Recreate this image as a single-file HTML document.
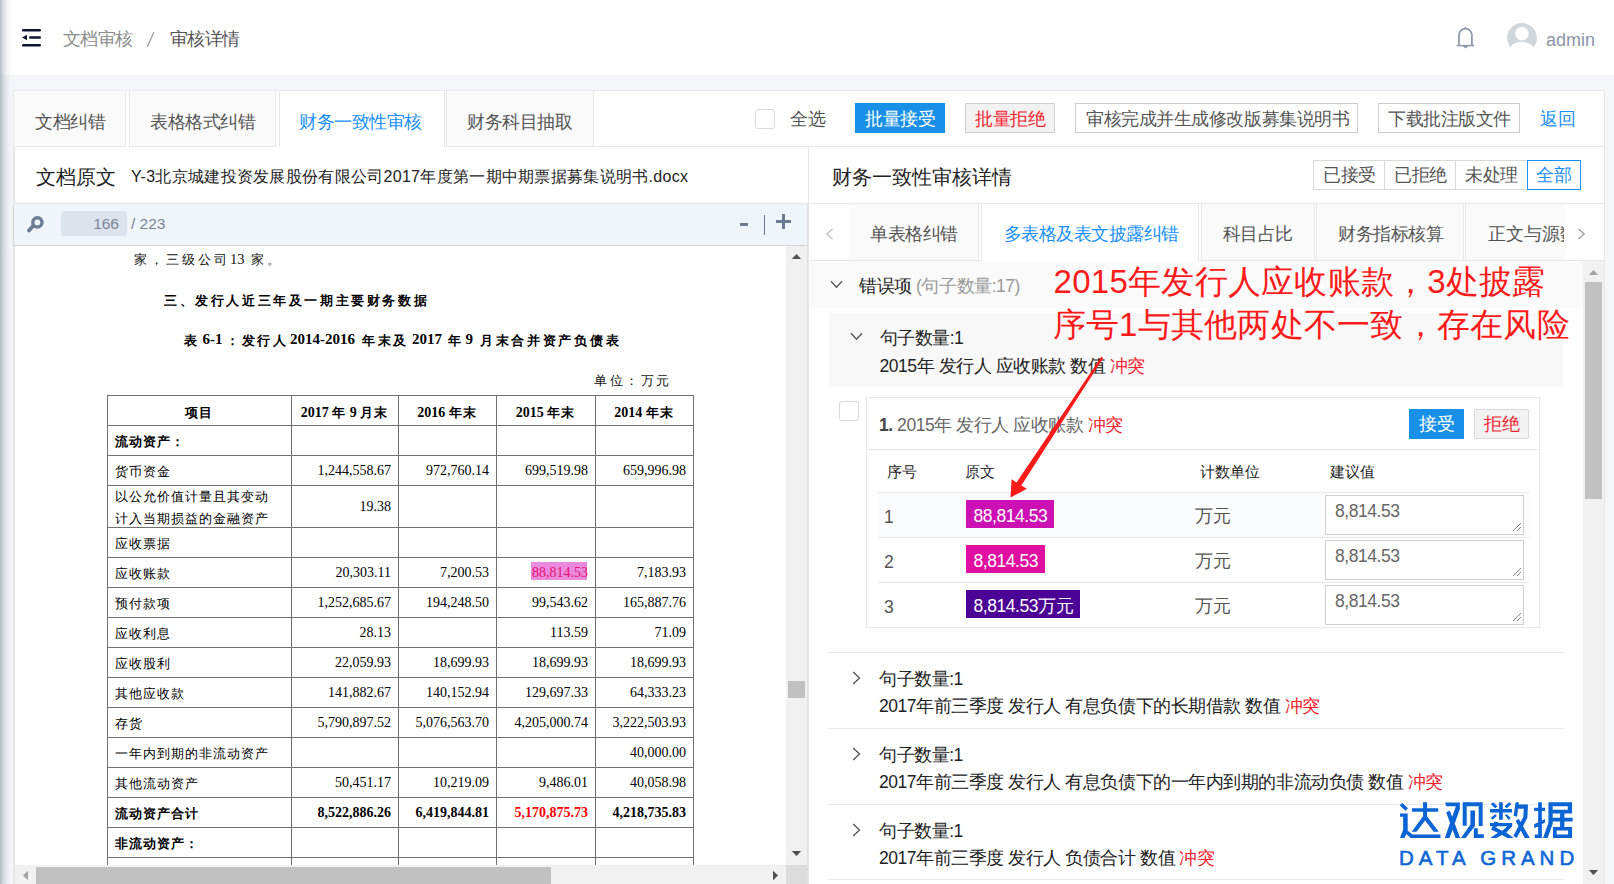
<!DOCTYPE html>
<html><head><meta charset="utf-8">
<style>
*{box-sizing:border-box;margin:0;padding:0}
html,body{width:1614px;height:884px;overflow:hidden;background:#f5f6fa;font-family:"Liberation Sans",sans-serif;color:#333}
.a{position:absolute}
.t{position:absolute;white-space:nowrap;line-height:1}
.c13{font-size:13px;letter-spacing:1px}
.f17{font-size:17.5px;letter-spacing:-0.45px}
</style></head><body>
<!-- header -->
<div class="a" style="left:0;top:0;width:1614px;height:75px;background:#fff"></div>
<svg class="a" style="left:22px;top:29px" width="20" height="18" viewBox="0 0 20 18">
<rect x="0" y="0" width="19" height="2.4" rx="1.2" fill="#0d1630"/>
<rect x="7" y="7.3" width="12" height="2.4" rx="1.2" fill="#0d1630"/>
<rect x="0" y="15" width="19" height="2.4" rx="1.2" fill="#0d1630"/>
<path d="M0 8.5 L5 5.8 L5 11.2 Z" fill="#0d1630"/>
</svg>
<div class="t f17" style="left:62.5px;top:31px;color:#8c8c8c">文档审核</div>
<svg class="a" style="left:140px;top:25px" width="20" height="28" viewBox="140 25 20 28"><path d="M153.9 32.2 L147.2 46.8" stroke="#999" stroke-width="1.25"/></svg>
<div class="t f17" style="left:169.5px;top:31px;color:#555">审核详情</div>
<!-- bell -->
<svg class="a" style="left:1450px;top:18px" width="100" height="36" viewBox="1450 18 100 36">
<path d="M1459 45.3 L1459 35.1 A6.45 6.45 0 0 1 1471.9 35.1 L1471.9 45.3" fill="none" stroke="#8e99ad" stroke-width="1.8"/>
<path d="M1456.7 45.6 L1474.2 45.6" stroke="#8e99ad" stroke-width="1.5"/>
<path d="M1464.2 28.6 L1465.45 26.2 L1466.7 28.6 Z" fill="#8e99ad"/>
<path d="M1463.6 46 A1.85 1.85 0 0 0 1467.3 46 Z" fill="#8e99ad" stroke="#8e99ad" stroke-width="0.8"/>
<defs><clipPath id="avc"><rect x="1500" y="18" width="45" height="29.3"/></clipPath>
<mask id="avm"><rect x="1500" y="18" width="50" height="36" fill="#fff"/><circle cx="1522" cy="33.6" r="6.8" fill="#000"/><circle cx="1522" cy="57.6" r="15.8" fill="#000"/></mask></defs>
<g clip-path="url(#avc)"><circle cx="1522" cy="37.95" r="14.85" fill="#cfd6dc" mask="url(#avm)"/></g>
</svg>
<div class="t" style="left:1546px;top:31px;font-size:18px;color:#8a94a6">admin</div>

<!-- left shadow -->
<div class="a" style="left:0;top:0;width:14px;height:884px;z-index:5;background:linear-gradient(to right,rgba(130,142,156,.58) 0,rgba(150,160,172,.36) 3px,rgba(170,180,192,.16) 7px,rgba(200,206,214,.04) 11px,rgba(255,255,255,0) 13px)"></div>
<!-- card -->
<div class="a" style="left:13px;top:90px;width:1592px;height:800px;background:#fff;border:1px solid #e8e8e8"></div>

<!-- main tabs -->
<div class="a" style="left:14px;top:91px;width:112px;height:56px;background:#fafafa;border-right:1px solid #e8e8e8;border-bottom:1px solid #e8e8e8"></div>
<div class="a" style="left:129px;top:91px;width:147px;height:56px;background:#fafafa;border:1px solid #e8e8e8;border-top:0"></div>
<div class="a" style="left:279px;top:91px;width:166px;height:56px;background:#fff;border-left:1px solid #e8e8e8;border-right:1px solid #e8e8e8"></div>
<div class="a" style="left:446px;top:91px;width:148px;height:56px;background:#fafafa;border:1px solid #e8e8e8;border-top:0"></div>
<div class="a" style="left:594px;top:146px;width:1010px;height:1px;background:#e8e8e8"></div>
<div class="t f17" style="left:35px;top:114px;color:#555">文档纠错</div>
<div class="t f17" style="left:150px;top:114px;color:#555">表格格式纠错</div>
<div class="t f17" style="left:299px;top:114px;color:#1890ff">财务一致性审核</div>
<div class="t f17" style="left:467px;top:114px;color:#555">财务科目抽取</div>

<!-- toolbar buttons -->
<div class="a" style="left:755px;top:109px;width:20px;height:20px;border:1px solid #d9d9d9;border-radius:3px;background:#fff"></div>
<div class="t f17" style="left:790px;top:111px;color:#555">全选</div>
<div class="a" style="left:855px;top:103px;width:90px;height:30px;background:#1890e8"></div>
<div class="t f17" style="left:865px;top:111px;color:#fff">批量接受</div>
<div class="a" style="left:965px;top:103px;width:90px;height:30px;background:#f2f2f2;border:1px solid #d0d0d0"></div>
<div class="t f17" style="left:975px;top:111px;color:#f5222d">批量拒绝</div>
<div class="a" style="left:1075px;top:103px;width:283px;height:30px;background:#fff;border:1px solid #ccc"></div>
<div class="t f17" style="left:1086px;top:111px;color:#555">审核完成并生成修改版募集说明书</div>
<div class="a" style="left:1378px;top:103px;width:142px;height:30px;background:#fff;border:1px solid #ccc"></div>
<div class="t f17" style="left:1388px;top:111px;color:#555">下载批注版文件</div>
<div class="t f17" style="left:1540px;top:111px;color:#1890ff">返回</div>

<!-- panel divider -->
<div class="a" style="left:14px;top:147px;width:1px;height:737px;background:#e4e4e4"></div>
<div class="a" style="left:808px;top:147px;width:1px;height:737px;background:#e8e8e8"></div>
<div class="a" style="left:14px;top:203px;width:1590px;height:1px;background:#e8e8e8"></div>

<!-- LEFT PANEL HEADER -->
<div class="t" style="left:36px;top:167px;font-size:20px;color:#222">文档原文</div>
<div class="t" style="left:131px;top:169px;font-size:16px;color:#222;letter-spacing:0.3px">Y-3北京城建投资发展股份有限公司2017年度第一期中期票据募集说明书.docx</div>

<!-- left toolbar -->
<div class="a" style="left:14px;top:204px;width:793px;height:41px;background:#f0f5fc;box-shadow:0 1px 2px rgba(0,0,0,.25)"></div>
<svg class="a" style="left:27px;top:215px" width="19" height="19" viewBox="0 0 19 19">
<circle cx="10.4" cy="7.4" r="4.6" fill="none" stroke="#6b7c93" stroke-width="3.4"/>
<path d="M6 11 L2 15.6" stroke="#6b7c93" stroke-width="3.8" stroke-linecap="round"/>
</svg>
<div class="a" style="left:61px;top:211px;width:66px;height:25px;background:#dde3ec;border-radius:3px"></div>
<div class="t" style="left:61px;top:216px;width:58px;text-align:right;font-size:15.5px;color:#7a8696">166</div>
<div class="t" style="left:131px;top:216px;font-size:15.5px;color:#7a8696">/ 223</div>
<div class="a" style="left:740px;top:223px;width:8px;height:3px;background:#6b7c93"></div>
<div class="a" style="left:764px;top:215px;width:1px;height:20px;background:#6b7c93"></div>
<div class="a" style="left:776px;top:220px;width:15px;height:3px;background:#6b7c93"></div>
<div class="a" style="left:782px;top:214px;width:3px;height:15px;background:#6b7c93"></div>

<div class="a" style="left:0;top:0;width:1614px;height:884px;clip-path:inset(246px 828px 19px 14px)">
<div class="a" style="left:15px;top:246px;width:771px;height:619px;background:#fff"></div>
<div class="t" style="left:134px;top:253px;font-size:13px;color:#111;font-family:'Liberation Serif',serif;letter-spacing:3px;">家，三级公司</div>
<div class="t" style="left:230px;top:252px;font-size:14.5px;color:#111;font-family:'Liberation Serif',serif;">13</div>
<div class="t" style="left:251px;top:253px;font-size:13px;color:#111;font-family:'Liberation Serif',serif;letter-spacing:3px;">家。</div>
<div class="t" style="left:164px;top:294px;font-size:13px;color:#000;font-family:'Liberation Serif',serif;font-weight:bold;letter-spacing:2.6px;">三、发行人近三年及一期主要财务数据</div>
<div class="t" style="left:184px;top:334px;font-size:13px;color:#000;font-family:'Liberation Serif',serif;font-weight:bold;">表</div>
<div class="t" style="left:202.5px;top:332px;font-size:15px;color:#000;font-family:'Liberation Serif',serif;font-weight:bold;">6-1</div>
<div class="t" style="left:226px;top:334px;font-size:13px;color:#000;font-family:'Liberation Serif',serif;font-weight:bold;letter-spacing:2.7px;">：发行人</div>
<div class="t" style="left:290px;top:332px;font-size:15px;color:#000;font-family:'Liberation Serif',serif;font-weight:bold;">2014-2016</div>
<div class="t" style="left:362px;top:334px;font-size:13px;color:#000;font-family:'Liberation Serif',serif;font-weight:bold;letter-spacing:2.7px;">年末及</div>
<div class="t" style="left:412px;top:332px;font-size:15px;color:#000;font-family:'Liberation Serif',serif;font-weight:bold;">2017</div>
<div class="t" style="left:448px;top:334px;font-size:13px;color:#000;font-family:'Liberation Serif',serif;font-weight:bold;">年</div>
<div class="t" style="left:465.5px;top:332px;font-size:15px;color:#000;font-family:'Liberation Serif',serif;font-weight:bold;">9</div>
<div class="t" style="left:480px;top:334px;font-size:13px;color:#000;font-family:'Liberation Serif',serif;font-weight:bold;letter-spacing:2.7px;">月末合并资产负债表</div>
<div class="t" style="left:594px;top:374px;font-size:13px;color:#111;font-family:'Liberation Serif',serif;letter-spacing:2.5px;">单位：万元</div>
<div class="a" style="left:107px;top:395px;width:587px;height:1px;background:#707070"></div>
<div class="a" style="left:107px;top:425px;width:587px;height:1px;background:#707070"></div>
<div class="a" style="left:107px;top:455px;width:587px;height:1px;background:#707070"></div>
<div class="a" style="left:107px;top:485px;width:587px;height:1px;background:#707070"></div>
<div class="a" style="left:107px;top:527px;width:587px;height:1px;background:#707070"></div>
<div class="a" style="left:107px;top:557px;width:587px;height:1px;background:#707070"></div>
<div class="a" style="left:107px;top:587px;width:587px;height:1px;background:#707070"></div>
<div class="a" style="left:107px;top:617px;width:587px;height:1px;background:#707070"></div>
<div class="a" style="left:107px;top:647px;width:587px;height:1px;background:#707070"></div>
<div class="a" style="left:107px;top:677px;width:587px;height:1px;background:#707070"></div>
<div class="a" style="left:107px;top:707px;width:587px;height:1px;background:#707070"></div>
<div class="a" style="left:107px;top:737px;width:587px;height:1px;background:#707070"></div>
<div class="a" style="left:107px;top:767px;width:587px;height:1px;background:#707070"></div>
<div class="a" style="left:107px;top:797px;width:587px;height:1px;background:#707070"></div>
<div class="a" style="left:107px;top:827px;width:587px;height:1px;background:#707070"></div>
<div class="a" style="left:107px;top:857px;width:587px;height:1px;background:#707070"></div>
<div class="a" style="left:107px;top:887px;width:587px;height:1px;background:#707070"></div>
<div class="a" style="left:107px;top:395px;width:1px;height:500px;background:#707070"></div>
<div class="a" style="left:291px;top:395px;width:1px;height:500px;background:#707070"></div>
<div class="a" style="left:398px;top:395px;width:1px;height:500px;background:#707070"></div>
<div class="a" style="left:496px;top:395px;width:1px;height:500px;background:#707070"></div>
<div class="a" style="left:595px;top:395px;width:1px;height:500px;background:#707070"></div>
<div class="a" style="left:693px;top:395px;width:1px;height:500px;background:#707070"></div>
<div class="t" style="left:107px;top:398px;width:184px;height:30px;line-height:30px;text-align:center;font-size:14px;font-family:'Liberation Serif',serif;color:#000;font-weight:bold;"><span class="c13">项目</span></div>
<div class="t" style="left:291px;top:398px;width:107px;height:30px;line-height:30px;text-align:center;font-size:14px;font-family:'Liberation Serif',serif;color:#000;font-weight:bold;">2017 <span class="c13">年</span> 9 <span class="c13">月末</span></div>
<div class="t" style="left:398px;top:398px;width:98px;height:30px;line-height:30px;text-align:center;font-size:14px;font-family:'Liberation Serif',serif;color:#000;font-weight:bold;">2016 <span class="c13">年末</span></div>
<div class="t" style="left:496px;top:398px;width:99px;height:30px;line-height:30px;text-align:center;font-size:14px;font-family:'Liberation Serif',serif;color:#000;font-weight:bold;">2015 <span class="c13">年末</span></div>
<div class="t" style="left:595px;top:398px;width:98px;height:30px;line-height:30px;text-align:center;font-size:14px;font-family:'Liberation Serif',serif;color:#000;font-weight:bold;">2014 <span class="c13">年末</span></div>
<div class="t" style="left:115px;top:427px;height:30px;line-height:30px;font-size:13px;letter-spacing:1px;font-family:'Liberation Serif',serif;color:#000;font-weight:bold;">流动资产：</div>
<div class="t" style="left:115px;top:457px;height:30px;line-height:30px;font-size:13px;letter-spacing:1px;font-family:'Liberation Serif',serif;color:#000;">货币资金</div>
<div class="t" style="left:291px;top:456px;width:100px;height:30px;line-height:30px;text-align:right;font-size:14px;font-family:'Liberation Serif',serif;color:#000;">1,244,558.67</div>
<div class="t" style="left:398px;top:456px;width:91px;height:30px;line-height:30px;text-align:right;font-size:14px;font-family:'Liberation Serif',serif;color:#000;">972,760.14</div>
<div class="t" style="left:496px;top:456px;width:92px;height:30px;line-height:30px;text-align:right;font-size:14px;font-family:'Liberation Serif',serif;color:#000;">699,519.98</div>
<div class="t" style="left:595px;top:456px;width:91px;height:30px;line-height:30px;text-align:right;font-size:14px;font-family:'Liberation Serif',serif;color:#000;">659,996.98</div>
<div class="t" style="left:115px;top:486px;line-height:22px;font-size:13px;letter-spacing:1px;font-family:'Liberation Serif',serif;color:#000;">以公允价值计量且其变动<br>计入当期损益的金融资产</div>
<div class="t" style="left:291px;top:486px;width:100px;height:42px;line-height:42px;text-align:right;font-size:14px;font-family:'Liberation Serif',serif;color:#000;">19.38</div>
<div class="t" style="left:115px;top:529px;height:30px;line-height:30px;font-size:13px;letter-spacing:1px;font-family:'Liberation Serif',serif;color:#000;">应收票据</div>
<div class="t" style="left:115px;top:559px;height:30px;line-height:30px;font-size:13px;letter-spacing:1px;font-family:'Liberation Serif',serif;color:#000;">应收账款</div>
<div class="t" style="left:291px;top:558px;width:100px;height:30px;line-height:30px;text-align:right;font-size:14px;font-family:'Liberation Serif',serif;color:#000;">20,303.11</div>
<div class="t" style="left:398px;top:558px;width:91px;height:30px;line-height:30px;text-align:right;font-size:14px;font-family:'Liberation Serif',serif;color:#000;">7,200.53</div>
<div class="a" style="left:531px;top:562px;width:56px;height:18px;background:#e98ade"></div>
<div class="t" style="left:496px;top:558px;width:92px;height:30px;line-height:30px;text-align:right;font-size:14px;font-family:'Liberation Serif',serif;color:#e8106e;">88,814.53</div>
<div class="t" style="left:595px;top:558px;width:91px;height:30px;line-height:30px;text-align:right;font-size:14px;font-family:'Liberation Serif',serif;color:#000;">7,183.93</div>
<div class="t" style="left:115px;top:589px;height:30px;line-height:30px;font-size:13px;letter-spacing:1px;font-family:'Liberation Serif',serif;color:#000;">预付款项</div>
<div class="t" style="left:291px;top:588px;width:100px;height:30px;line-height:30px;text-align:right;font-size:14px;font-family:'Liberation Serif',serif;color:#000;">1,252,685.67</div>
<div class="t" style="left:398px;top:588px;width:91px;height:30px;line-height:30px;text-align:right;font-size:14px;font-family:'Liberation Serif',serif;color:#000;">194,248.50</div>
<div class="t" style="left:496px;top:588px;width:92px;height:30px;line-height:30px;text-align:right;font-size:14px;font-family:'Liberation Serif',serif;color:#000;">99,543.62</div>
<div class="t" style="left:595px;top:588px;width:91px;height:30px;line-height:30px;text-align:right;font-size:14px;font-family:'Liberation Serif',serif;color:#000;">165,887.76</div>
<div class="t" style="left:115px;top:619px;height:30px;line-height:30px;font-size:13px;letter-spacing:1px;font-family:'Liberation Serif',serif;color:#000;">应收利息</div>
<div class="t" style="left:291px;top:618px;width:100px;height:30px;line-height:30px;text-align:right;font-size:14px;font-family:'Liberation Serif',serif;color:#000;">28.13</div>
<div class="t" style="left:496px;top:618px;width:92px;height:30px;line-height:30px;text-align:right;font-size:14px;font-family:'Liberation Serif',serif;color:#000;">113.59</div>
<div class="t" style="left:595px;top:618px;width:91px;height:30px;line-height:30px;text-align:right;font-size:14px;font-family:'Liberation Serif',serif;color:#000;">71.09</div>
<div class="t" style="left:115px;top:649px;height:30px;line-height:30px;font-size:13px;letter-spacing:1px;font-family:'Liberation Serif',serif;color:#000;">应收股利</div>
<div class="t" style="left:291px;top:648px;width:100px;height:30px;line-height:30px;text-align:right;font-size:14px;font-family:'Liberation Serif',serif;color:#000;">22,059.93</div>
<div class="t" style="left:398px;top:648px;width:91px;height:30px;line-height:30px;text-align:right;font-size:14px;font-family:'Liberation Serif',serif;color:#000;">18,699.93</div>
<div class="t" style="left:496px;top:648px;width:92px;height:30px;line-height:30px;text-align:right;font-size:14px;font-family:'Liberation Serif',serif;color:#000;">18,699.93</div>
<div class="t" style="left:595px;top:648px;width:91px;height:30px;line-height:30px;text-align:right;font-size:14px;font-family:'Liberation Serif',serif;color:#000;">18,699.93</div>
<div class="t" style="left:115px;top:679px;height:30px;line-height:30px;font-size:13px;letter-spacing:1px;font-family:'Liberation Serif',serif;color:#000;">其他应收款</div>
<div class="t" style="left:291px;top:678px;width:100px;height:30px;line-height:30px;text-align:right;font-size:14px;font-family:'Liberation Serif',serif;color:#000;">141,882.67</div>
<div class="t" style="left:398px;top:678px;width:91px;height:30px;line-height:30px;text-align:right;font-size:14px;font-family:'Liberation Serif',serif;color:#000;">140,152.94</div>
<div class="t" style="left:496px;top:678px;width:92px;height:30px;line-height:30px;text-align:right;font-size:14px;font-family:'Liberation Serif',serif;color:#000;">129,697.33</div>
<div class="t" style="left:595px;top:678px;width:91px;height:30px;line-height:30px;text-align:right;font-size:14px;font-family:'Liberation Serif',serif;color:#000;">64,333.23</div>
<div class="t" style="left:115px;top:709px;height:30px;line-height:30px;font-size:13px;letter-spacing:1px;font-family:'Liberation Serif',serif;color:#000;">存货</div>
<div class="t" style="left:291px;top:708px;width:100px;height:30px;line-height:30px;text-align:right;font-size:14px;font-family:'Liberation Serif',serif;color:#000;">5,790,897.52</div>
<div class="t" style="left:398px;top:708px;width:91px;height:30px;line-height:30px;text-align:right;font-size:14px;font-family:'Liberation Serif',serif;color:#000;">5,076,563.70</div>
<div class="t" style="left:496px;top:708px;width:92px;height:30px;line-height:30px;text-align:right;font-size:14px;font-family:'Liberation Serif',serif;color:#000;">4,205,000.74</div>
<div class="t" style="left:595px;top:708px;width:91px;height:30px;line-height:30px;text-align:right;font-size:14px;font-family:'Liberation Serif',serif;color:#000;">3,222,503.93</div>
<div class="t" style="left:115px;top:739px;height:30px;line-height:30px;font-size:13px;letter-spacing:1px;font-family:'Liberation Serif',serif;color:#000;">一年内到期的非流动资产</div>
<div class="t" style="left:595px;top:738px;width:91px;height:30px;line-height:30px;text-align:right;font-size:14px;font-family:'Liberation Serif',serif;color:#000;">40,000.00</div>
<div class="t" style="left:115px;top:769px;height:30px;line-height:30px;font-size:13px;letter-spacing:1px;font-family:'Liberation Serif',serif;color:#000;">其他流动资产</div>
<div class="t" style="left:291px;top:768px;width:100px;height:30px;line-height:30px;text-align:right;font-size:14px;font-family:'Liberation Serif',serif;color:#000;">50,451.17</div>
<div class="t" style="left:398px;top:768px;width:91px;height:30px;line-height:30px;text-align:right;font-size:14px;font-family:'Liberation Serif',serif;color:#000;">10,219.09</div>
<div class="t" style="left:496px;top:768px;width:92px;height:30px;line-height:30px;text-align:right;font-size:14px;font-family:'Liberation Serif',serif;color:#000;">9,486.01</div>
<div class="t" style="left:595px;top:768px;width:91px;height:30px;line-height:30px;text-align:right;font-size:14px;font-family:'Liberation Serif',serif;color:#000;">40,058.98</div>
<div class="t" style="left:115px;top:799px;height:30px;line-height:30px;font-size:13px;letter-spacing:1px;font-family:'Liberation Serif',serif;color:#000;font-weight:bold;">流动资产合计</div>
<div class="t" style="left:291px;top:798px;width:100px;height:30px;line-height:30px;text-align:right;font-size:14px;font-family:'Liberation Serif',serif;color:#000;font-weight:bold;">8,522,886.26</div>
<div class="t" style="left:398px;top:798px;width:91px;height:30px;line-height:30px;text-align:right;font-size:14px;font-family:'Liberation Serif',serif;color:#000;font-weight:bold;">6,419,844.81</div>
<div class="t" style="left:496px;top:798px;width:92px;height:30px;line-height:30px;text-align:right;font-size:14px;font-family:'Liberation Serif',serif;color:#ff0000;font-weight:bold;">5,170,875.73</div>
<div class="t" style="left:595px;top:798px;width:91px;height:30px;line-height:30px;text-align:right;font-size:14px;font-family:'Liberation Serif',serif;color:#000;font-weight:bold;">4,218,735.83</div>
<div class="t" style="left:115px;top:829px;height:30px;line-height:30px;font-size:13px;letter-spacing:1px;font-family:'Liberation Serif',serif;color:#000;font-weight:bold;">非流动资产：</div>
</div>
<div class="a" style="left:786px;top:246px;width:21px;height:619px;background:#f1f1f1"></div>
<svg class="a" style="left:791px;top:253px" width="11" height="7"><path d="M0.8 6 L5.5 1 L10.2 6 Z" fill="#505050"/></svg>
<div class="a" style="left:788px;top:681px;width:17px;height:17px;background:#c1c1c1"></div>
<svg class="a" style="left:791px;top:850px" width="11" height="7"><path d="M0.8 1 L5.5 6 L10.2 1 Z" fill="#505050"/></svg>
<div class="a" style="left:15px;top:865px;width:771px;height:19px;background:#f1f1f1"></div>
<div class="a" style="left:786px;top:865px;width:21px;height:19px;background:#dcdcdc"></div>
<svg class="a" style="left:22px;top:870px" width="7" height="11"><path d="M6 0.8 L1 5.5 L6 10.2 Z" fill="#a3a3a3"/></svg>
<div class="a" style="left:36px;top:867px;width:515px;height:17px;background:#c1c1c1"></div>
<svg class="a" style="left:772px;top:870px" width="7" height="11"><path d="M1 0.8 L6 5.5 L1 10.2 Z" fill="#505050"/></svg>
<div class="a" style="left:807px;top:204px;width:1px;height:680px;background:#e0e0e0"></div>
<div class="t" style="left:832px;top:167px;font-size:20px;color:#222;">财务一致性审核详情</div>
<div class="a" style="left:1313px;top:160px;width:268px;height:30px;background:#fff;border:1px solid #d9d9d9;"></div>
<div class="a" style="left:1384px;top:160px;width:1px;height:30px;background:#d9d9d9;"></div>
<div class="a" style="left:1455px;top:160px;width:1px;height:30px;background:#d9d9d9;"></div>
<div class="a" style="left:1527px;top:160px;width:54px;height:30px;background:#fff;border:1px solid #1890ff;"></div>
<div class="t" style="left:1323px;top:167px;font-size:17.5px;color:#555;letter-spacing:-0.45px;">已接受</div>
<div class="t" style="left:1394px;top:167px;font-size:17.5px;color:#555;letter-spacing:-0.45px;">已拒绝</div>
<div class="t" style="left:1465px;top:167px;font-size:17.5px;color:#555;letter-spacing:-0.45px;">未处理</div>
<div class="t" style="left:1536px;top:167px;font-size:17.5px;color:#1890ff;letter-spacing:-0.45px;">全部</div>
<div class="a" style="left:849px;top:204px;width:130px;height:56px;background:#fafafa;border-right:1px solid #e8e8e8"></div>
<div class="a" style="left:981px;top:204px;width:218px;height:57px;background:#fff;border-left:1px solid #e8e8e8;border-right:1px solid #e8e8e8"></div>
<div class="a" style="left:1201px;top:204px;width:114px;height:56px;background:#fafafa;border-left:1px solid #e8e8e8;border-right:1px solid #e8e8e8"></div>
<div class="a" style="left:1316px;top:204px;width:148px;height:56px;background:#fafafa;border-left:1px solid #e8e8e8;border-right:1px solid #e8e8e8"></div>
<div class="a" style="left:1465px;top:204px;width:100px;height:56px;background:#fafafa;border-left:1px solid #e8e8e8"></div>
<div class="a" style="left:809px;top:260px;width:172px;height:1px;background:#e8e8e8;"></div>
<div class="a" style="left:1199px;top:260px;width:405px;height:1px;background:#e8e8e8;"></div>
<svg class="a" style="left:825px;top:228px" width="9" height="12"><path d="M7.5 1 L1.8 6 L7.5 11" fill="none" stroke="#bbb" stroke-width="1.2"/></svg>
<svg class="a" style="left:1577px;top:228px" width="9" height="12"><path d="M1.5 1 L7.2 6 L1.5 11" fill="none" stroke="#999" stroke-width="1.2"/></svg>
<div class="t" style="left:870px;top:226px;font-size:17.5px;color:#555;letter-spacing:-0.45px;">单表格纠错</div>
<div class="t" style="left:1003.5px;top:226px;font-size:17.5px;color:#1890ff;letter-spacing:-0.45px;">多表格及表文披露纠错</div>
<div class="t" style="left:1222.5px;top:226px;font-size:17.5px;color:#555;letter-spacing:-0.45px;">科目占比</div>
<div class="t" style="left:1338px;top:226px;font-size:17.5px;color:#555;letter-spacing:-0.45px;">财务指标核算</div>
<div class="a" style="left:1466px;top:204px;width:98px;height:56px;overflow:hidden"><div class="t" style="left:22px;top:22px;font-size:17.5px;color:#555">正文与源数据</div></div>
<div class="a" style="left:809px;top:261px;width:774px;height:47px;background:#fafafa;"></div>
<svg class="a" style="left:830px;top:280px" width="13" height="9"><path d="M1 1.2 L6.5 7.2 L12 1.2" fill="none" stroke="#555" stroke-width="1.3"/></svg>
<div class="t" style="left:859px;top:278px;font-size:17.5px;color:#222;letter-spacing:-0.45px;">错误项 <span style="color:#999">(句子数量:17)</span></div>
<div class="a" style="left:829px;top:313px;width:734px;height:74px;background:#f8f8f8;"></div>
<svg class="a" style="left:850px;top:332px" width="13" height="9"><path d="M1 1.2 L6.5 7.2 L12 1.2" fill="none" stroke="#555" stroke-width="1.3"/></svg>
<div class="t" style="left:879.5px;top:329.5px;font-size:17.5px;color:#222;letter-spacing:-0.45px;">句子数量:1</div>
<div class="t" style="left:879.5px;top:357.5px;font-size:17.5px;color:#222;letter-spacing:-0.45px;">2015年 发行人 应收账款 数值 <span style="color:#f5222d">冲突</span></div>
<div class="a" style="left:839px;top:401px;width:20px;height:20px;background:#fff;border:1px solid #d9d9d9;border-radius:3px"></div>
<div class="a" style="left:866px;top:397px;width:674px;height:231px;background:#fff;border:1px solid #e8e8e8;"></div>
<div class="t" style="left:879px;top:417px;font-size:17.5px;color:#666;letter-spacing:-0.45px;"><b style="color:#444">1.</b> 2015年 发行人 应收账款 <span style="color:#f5222d">冲突</span></div>
<div class="a" style="left:1409px;top:409px;width:55px;height:30px;background:#1890e8;"></div>
<div class="t" style="left:1419px;top:416px;font-size:17.5px;color:#fff;letter-spacing:-0.45px;">接受</div>
<div class="a" style="left:1474px;top:409px;width:55px;height:30px;background:#f2f2f2;border:1px solid #d9d9d9;"></div>
<div class="t" style="left:1484px;top:416px;font-size:17.5px;color:#f5222d;letter-spacing:-0.45px;">拒绝</div>
<div class="a" style="left:867px;top:449px;width:672px;height:1px;background:#e8e8e8;"></div>
<div class="t" style="left:887px;top:463.5px;font-size:15px;color:#222;">序号</div>
<div class="t" style="left:965px;top:463.5px;font-size:15px;color:#222;">原文</div>
<div class="t" style="left:1199.5px;top:463.5px;font-size:15px;color:#222;">计数单位</div>
<div class="t" style="left:1330px;top:463.5px;font-size:15px;color:#222;">建议值</div>
<div class="a" style="left:878px;top:492px;width:651px;height:1px;background:#e8e8e8;"></div>
<div class="a" style="left:878px;top:493px;width:651px;height:44px;background:#fbfcfe;"></div>
<div class="a" style="left:878px;top:537px;width:651px;height:1px;background:#e8e8e8;"></div>
<div class="a" style="left:878px;top:582px;width:651px;height:1px;background:#e8e8e8;"></div>
<div class="t" style="left:884px;top:508.5px;font-size:17.5px;color:#555;letter-spacing:-0.45px;font-size:17.5px">1</div>
<div class="a" style="left:966px;top:500px;width:88px;height:28px;background:#cc10b4;"></div>
<div class="t" style="left:973.5px;top:507.5px;font-size:17.5px;color:#fff;letter-spacing:-0.45px;">88,814.53</div>
<div class="t" style="left:1195px;top:508px;font-size:17.5px;color:#555;letter-spacing:-0.45px;">万元</div>
<div class="a" style="left:1325px;top:495px;width:199px;height:40px;background:#fff;border:1px solid #d0d0d0;"></div>
<div class="t" style="left:1335px;top:502.5px;font-size:17.5px;color:#666;letter-spacing:-0.45px;">8,814.53</div>
<svg class="a" style="left:1512px;top:522px" width="10" height="10"><path d="M1 9 L9 1 M5 9 L9 5" stroke="#888" stroke-width="1"/></svg>
<div class="t" style="left:884px;top:553.5px;font-size:17.5px;color:#555;letter-spacing:-0.45px;font-size:17.5px">2</div>
<div class="a" style="left:966px;top:545px;width:79px;height:28px;background:#e10ea2;"></div>
<div class="t" style="left:973.5px;top:552.5px;font-size:17.5px;color:#fff;letter-spacing:-0.45px;">8,814.53</div>
<div class="t" style="left:1195px;top:553px;font-size:17.5px;color:#555;letter-spacing:-0.45px;">万元</div>
<div class="a" style="left:1325px;top:540px;width:199px;height:40px;background:#fff;border:1px solid #d0d0d0;"></div>
<div class="t" style="left:1335px;top:547.5px;font-size:17.5px;color:#666;letter-spacing:-0.45px;">8,814.53</div>
<svg class="a" style="left:1512px;top:567px" width="10" height="10"><path d="M1 9 L9 1 M5 9 L9 5" stroke="#888" stroke-width="1"/></svg>
<div class="t" style="left:884px;top:598.5px;font-size:17.5px;color:#555;letter-spacing:-0.45px;font-size:17.5px">3</div>
<div class="a" style="left:966px;top:590px;width:114px;height:28px;background:#4b0096;"></div>
<div class="t" style="left:973.5px;top:597.5px;font-size:17.5px;color:#fff;letter-spacing:-0.45px;">8,814.53万元</div>
<div class="t" style="left:1195px;top:598px;font-size:17.5px;color:#555;letter-spacing:-0.45px;">万元</div>
<div class="a" style="left:1325px;top:585px;width:199px;height:40px;background:#fff;border:1px solid #d0d0d0;"></div>
<div class="t" style="left:1335px;top:592.5px;font-size:17.5px;color:#666;letter-spacing:-0.45px;">8,814.53</div>
<svg class="a" style="left:1512px;top:612px" width="10" height="10"><path d="M1 9 L9 1 M5 9 L9 5" stroke="#888" stroke-width="1"/></svg>
<div class="a" style="left:829px;top:652px;width:734px;height:1px;background:#e8e8e8;"></div>
<div class="a" style="left:829px;top:728px;width:734px;height:1px;background:#e8e8e8;"></div>
<div class="a" style="left:829px;top:804px;width:734px;height:1px;background:#e8e8e8;"></div>
<div class="a" style="left:829px;top:879px;width:734px;height:1px;background:#e8e8e8;"></div>
<svg class="a" style="left:852px;top:671px" width="9" height="14"><path d="M1.2 1 L7.5 7 L1.2 13" fill="none" stroke="#555" stroke-width="1.3"/></svg>
<div class="t" style="left:879px;top:670.5px;font-size:17.5px;color:#222;letter-spacing:-0.45px;">句子数量:1</div>
<div class="t" style="left:879px;top:697.5px;font-size:17.5px;color:#222;letter-spacing:-0.45px;">2017年前三季度 发行人 有息负债下的长期借款 数值 <span style="color:#f5222d">冲突</span></div>
<svg class="a" style="left:852px;top:747px" width="9" height="14"><path d="M1.2 1 L7.5 7 L1.2 13" fill="none" stroke="#555" stroke-width="1.3"/></svg>
<div class="t" style="left:879px;top:746.5px;font-size:17.5px;color:#222;letter-spacing:-0.45px;">句子数量:1</div>
<div class="t" style="left:879px;top:773.5px;font-size:17.5px;color:#222;letter-spacing:-0.45px;">2017年前三季度 发行人 有息负债下的一年内到期的非流动负债 数值 <span style="color:#f5222d">冲突</span></div>
<svg class="a" style="left:852px;top:823px" width="9" height="14"><path d="M1.2 1 L7.5 7 L1.2 13" fill="none" stroke="#555" stroke-width="1.3"/></svg>
<div class="t" style="left:879px;top:822.5px;font-size:17.5px;color:#222;letter-spacing:-0.45px;">句子数量:1</div>
<div class="t" style="left:879px;top:849.5px;font-size:17.5px;color:#222;letter-spacing:-0.45px;">2017年前三季度 发行人 负债合计 数值 <span style="color:#f5222d">冲突</span></div>
<svg class="a" style="left:0;top:0" width="1614" height="884"><path d="M1399.71 805.13 L1402.27 803.02 L1407.97 808.26 L1405.41 810.83 Z M1399.99 813.39 L1407.69 813.39 L1407.69 816.81 L1399.99 816.81 Z M1403.13 813.39 L1407.69 813.39 L1407.69 829.93 L1403.13 829.93 Z M1403.13 829.64 L1407.69 829.64 L1407.69 830.78 L1412.53 834.49 L1440.47 834.49 L1440.47 837.91 L1410.82 837.91 L1406.26 833.92 L1404.55 837.91 L1399.99 837.91 Z M1423.08 802.28 L1427.07 802.28 L1427.07 816.81 L1423.08 816.81 Z M1411.96 808.26 L1438.19 808.26 L1438.19 811.68 L1411.96 811.68 Z M1423.08 816.24 L1427.07 816.24 L1438.76 831.64 L1433.63 831.64 L1425.08 820.52 L1416.52 831.64 L1411.68 831.64 Z M1445.03 802.56 L1459.85 802.56 L1459.85 809.12 L1449.59 837.91 L1444.75 837.91 L1455.86 806.27 L1446.17 806.27 Z M1446.17 812.25 L1449.88 810.83 L1460.14 837.91 L1455.58 837.91 Z M1462.70 802.28 L1482.66 802.28 L1482.66 806.27 L1462.70 806.27 Z M1462.70 802.28 L1466.70 802.28 L1466.70 825.65 L1462.70 825.65 Z M1478.67 802.28 L1482.66 802.28 L1482.66 825.94 L1478.67 825.94 Z M1470.40 810.54 L1474.96 810.54 L1474.96 825.37 L1470.40 825.37 Z M1470.40 824.51 L1474.96 824.51 L1474.96 825.94 L1465.56 837.91 L1460.99 837.91 Z M1473.82 828.22 L1477.81 828.22 L1477.81 837.91 L1473.82 837.91 Z M1473.82 834.20 L1483.80 834.20 L1483.80 837.91 L1473.82 837.91 Z M1499.11 802.28 L1502.81 802.28 L1502.81 819.66 L1499.11 819.66 Z M1489.99 809.12 L1511.94 809.12 L1511.94 812.54 L1489.99 812.54 Z M1490.84 803.99 L1493.12 802.28 L1497.40 806.27 L1495.12 808.26 Z M1504.52 806.55 L1509.09 802.28 L1511.37 803.99 L1506.81 808.26 Z M1490.84 817.67 L1495.12 814.25 L1496.83 815.96 L1492.55 819.66 Z M1504.81 815.10 L1506.81 814.25 L1510.80 817.95 L1508.80 819.95 Z M1489.99 823.09 L1512.22 823.09 L1512.22 826.22 L1489.99 826.22 Z M1494.55 821.38 L1498.54 822.23 L1496.26 827.65 L1502.24 830.78 L1507.38 826.22 L1512.22 826.22 L1506.23 832.49 L1513.65 837.91 L1507.38 837.91 L1501.96 835.06 L1496.54 837.91 L1490.27 837.91 L1497.97 832.78 L1491.13 829.64 Z M1515.64 802.28 L1518.78 802.28 L1517.07 816.81 L1513.65 815.67 Z M1517.64 804.56 L1527.90 804.56 L1527.90 808.83 L1517.64 808.83 Z M1523.91 806.55 L1527.90 806.55 L1527.33 817.95 L1516.78 837.91 L1513.36 835.91 L1523.34 816.81 Z M1515.64 820.81 L1518.78 819.09 L1529.90 837.91 L1524.76 837.91 Z M1534.17 807.69 L1545.00 807.69 L1545.00 811.11 L1534.17 811.11 Z M1538.16 802.28 L1541.87 802.28 L1541.87 837.91 L1538.16 837.91 Z M1534.74 834.49 L1541.87 834.49 L1541.87 837.91 L1534.74 837.91 Z M1534.17 824.23 L1545.00 819.09 L1545.00 822.52 L1534.17 828.22 Z M1548.42 802.28 L1572.08 802.28 L1572.08 806.27 L1548.42 806.27 Z M1548.42 809.69 L1572.08 809.69 L1572.08 813.39 L1548.42 813.39 Z M1567.81 802.28 L1572.08 802.28 L1572.08 813.39 L1567.81 813.39 Z M1548.42 802.28 L1552.70 802.28 L1552.70 823.66 L1547.57 837.91 L1543.01 837.91 L1548.42 823.09 Z M1552.70 817.67 L1572.65 817.67 L1572.65 821.38 L1552.70 821.38 Z M1560.11 813.39 L1564.39 813.39 L1564.39 827.65 L1560.11 827.65 Z M1552.99 827.08 L1572.08 827.08 L1572.08 837.91 L1552.99 837.91 L1552.99 827.08 L1556.69 830.50 L1556.69 834.49 L1568.09 834.49 L1568.09 830.50 L1556.69 830.50 Z" fill="#0a64d4" fill-rule="nonzero"/></svg>
<div class="t" style="left:1399px;top:848px;font-size:20.5px;color:#0d66d6;letter-spacing:5.0px;-webkit-text-stroke:0.6px #0d66d6">DATA GRAND</div>
<div class="a" style="left:1583px;top:261px;width:21px;height:623px;background:#f1f1f1;"></div>
<svg class="a" style="left:1588px;top:269px" width="11" height="7"><path d="M0.8 6 L5.5 1 L10.2 6 Z" fill="#a3a3a3"/></svg>
<div class="a" style="left:1585px;top:282px;width:17px;height:217px;background:#c1c1c1;"></div>
<svg class="a" style="left:1588px;top:869px" width="11" height="7"><path d="M0.8 1 L5.5 6 L10.2 1 Z" fill="#505050"/></svg>
<div class="t" style="left:1053.6px;top:265px;font-size:33px;color:#ff1a1a;letter-spacing:0.25px;">2015年发行人应收账款，3处披露</div>
<div class="t" style="left:1052.6px;top:308px;font-size:33px;color:#ff1a1a;letter-spacing:0.25px;">序号1与其他两处不一致，存在风险</div>
<svg class="a" style="left:0;top:0" width="1614" height="884"><path d="M1010.5 497.6 L1011.6 479.2 L1016.5 482.5 L1101.3 356.8 L1103.3 357.9 L1021.3 485.6 L1026.9 488.8 Z" fill="#ff1a1a"/></svg>
</body></html>
